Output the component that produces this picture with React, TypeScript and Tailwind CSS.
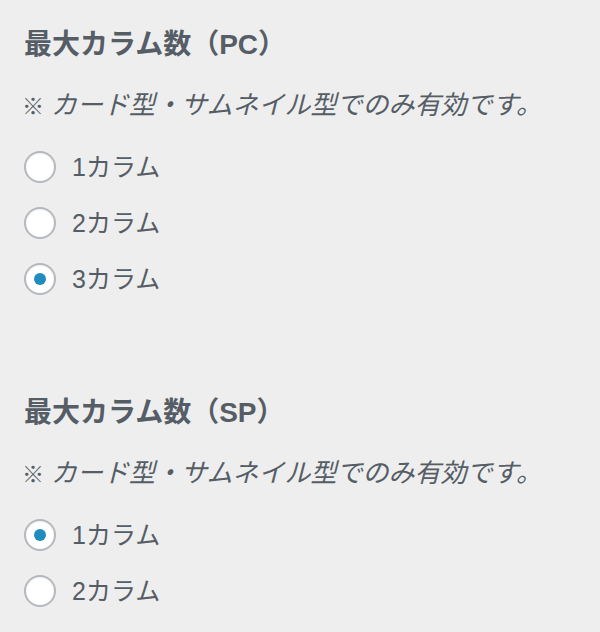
import React, { useState } from "react";

const FONT = {
  fontFamily: '"Liberation Sans", "Noto Sans CJK JP", sans-serif',
};

interface ColumnSettingProps {
  title: string;
  options: string[];
  initial: number;
}

function ColumnSetting({ title, options, initial }: ColumnSettingProps) {
  const [value, setValue] = useState(initial);

  return (
    <section>
      <h2 className="text-[28px] font-bold leading-[36px] text-[#555d66]">{title}</h2>
      <p className="mt-[24px] text-[26px] italic leading-[36px] text-[#555d66]">
        <span className="not-italic font-bold text-[22px] mr-[7px] ml-[-2px]">※</span>
        カード型・サムネイル型でのみ有効です。
      </p>
      <div className="mt-[14px]">
        {options.map((label, i) => (
          <label key={label} className="flex h-[56px] cursor-pointer items-center">
            <button
              type="button"
              onClick={() => setValue(i)}
              className="flex h-[32px] w-[32px] shrink-0 items-center justify-center rounded-full border-2 border-[#b4b9be] bg-white shadow-[inset_0_1px_2px_rgba(0,0,0,0.07)]"
            >
              {value === i && <span className="h-[12px] w-[12px] rounded-full bg-[#1e8cbe]" />}
            </button>
            <span className="ml-[16px] text-[25px] leading-[32px] text-[#555d66]">{label}</span>
          </label>
        ))}
      </div>
    </section>
  );
}

export default function App() {
  return (
    <div className="min-h-[632px] w-[600px] bg-[#eeeeee] pl-[24px] pt-[27px]" style={FONT}>
      <ColumnSetting title="最大カラム数（PC）" options={["1カラム", "2カラム", "3カラム"]} initial={2} />
      <div className="h-[88px]" />
      <ColumnSetting title="最大カラム数（SP）" options={["1カラム", "2カラム"]} initial={0} />
    </div>
  );
}
